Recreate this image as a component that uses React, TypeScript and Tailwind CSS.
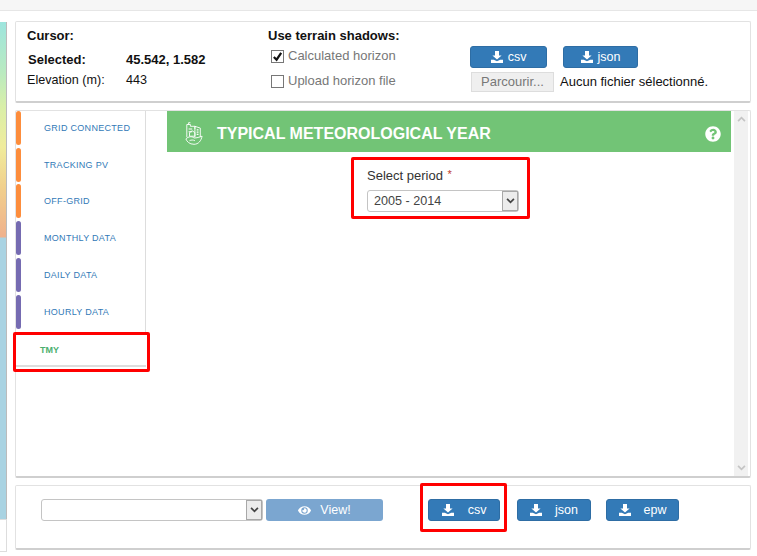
import { FaEye, FaQuestionCircle } from 'react-icons/fa';

const TABS = [
  { label: 'GRID CONNECTED', bar: 'bg-[#fd8d3c]' },
  { label: 'TRACKING PV', bar: 'bg-[#fd8d3c]' },
  { label: 'OFF-GRID', bar: 'bg-[#fd8d3c]' },
  { label: 'MONTHLY DATA', bar: 'bg-[#756bb1]' },
  { label: 'DAILY DATA', bar: 'bg-[#756bb1]' },
  { label: 'HOURLY DATA', bar: 'bg-[#756bb1]' },
];

function DownloadIcon() {
  return (
    <svg viewBox="0 0 12 12" className="w-3 h-3 shrink-0" fill="#fff">
      <path d="M4 0h4v4.5h2.6L6 8.6 1.400 4.500H4z" />
      <path d="M0 8.800h2.800L6 10.200l3.200-1.400H12V12H0z" />
    </svg>
  );
}

function Chevron({ up, color }: { up?: boolean; color: string }) {
  return (
    <svg viewBox="0 0 10 7" className="w-[9px] h-[6px]" fill="none" stroke={color} strokeWidth="2">
      <path d={up ? 'M1 6l4-4 4 4' : 'M1 1l4 4 4-4'} />
    </svg>
  );
}

function BlueButton({ label, className, gap }: { label: string; className: string; gap: string }) {
  return (
    <button className={`h-[22px] bg-[#337ab7] border border-[#2e6da4] rounded-[3px] text-white text-[12.500px] flex items-center justify-center ${gap} ${className}`}>
      <DownloadIcon />
      <span>{label}</span>
    </button>
  );
}

function FakeSelect({ value, className }: { value?: string; className: string }) {
  return (
    <div className={`h-[22px] bg-white border border-[#c4c4c4] rounded-[3px] flex items-stretch justify-between ${className}`}>
      <span className="pl-[6px] leading-[20px] text-[#444] text-[12.600px]">{value}</span>
      <span className="w-[16px] bg-[#ececec] border border-[#a8a8a8] flex items-center justify-center">
        <Chevron color="#444" />
      </span>
    </div>
  );
}

function BuildingIcon() {
  return (
    <svg viewBox="0 0 20 26" className="w-[18px] h-[25px] -mt-[2px] shrink-0" fill="none" stroke="#fff" strokeWidth="1">
      <path d="M2 17V3h4v2h5v3" />
      <path d="M4 3V1h2" />
      <path d="M11 17V5l6 2v10" />
      <path d="M13 9h2M13 11.500h2M13 14h2M4 8h4M4 11h4" strokeWidth="1.200" />
      <path d="M5 12l3-2 3 2v4H5z" />
      <path d="M1 19c3-3 7-3 9-1 3 0 6-1 9-2-1 5-4 9-9 9-5 0-8-3-9-6z" />
      <path d="M5 21c2-1 4-1 6 0" />
    </svg>
  );
}

export default function App() {
  return (
    <div className="relative w-[757px] h-[556px] overflow-hidden bg-white font-['Liberation_Sans',Arial,sans-serif] text-[13px] text-[#111]">
      <div className="h-[11px] bg-[#f6f6f6] border-b border-[#e6e6e6]" />

      <div className="flex pt-[10px] h-[545px]">
        <div className="w-[7px] shrink-0 flex flex-col pt-[1px]">
          <div className="h-[497px] border-r border-[#bbb] bg-[linear-gradient(180deg,#9de5de_0px,#b9eac0_50px,#d9efa8_85px,#f0ec9c_125px,#f1d08c_165px,#efb18c_215px,#a9d3e2_216px,#a9d3e2_100%)]" />
          <div className="h-[33px] border-r border-t border-b border-[#ddd] bg-white" />
        </div>

        <div className="ml-[8px] w-[736px] flex flex-col">
          {/* Top panel */}
          <div className="h-[82px] shrink-0 bg-white border border-[#e2e2e2] border-b-2 border-b-[#cfcfcf] rounded-[2px] flex">
            <div className="w-[239px] pl-[11px] pt-[6px] shrink-0">
              <div className="font-bold text-[13px] leading-[16px]">Cursor:</div>
              <div className="flex mt-[8px] font-bold leading-[16px]">
                <span className="w-[99px] pl-[1px]">Selected:</span>
                <span>45.542, 1.582</span>
              </div>
              <div className="flex mt-[4px] text-[12.600px] leading-[16px]">
                <span className="w-[99px]">Elevation (m):</span>
                <span>443</span>
              </div>
            </div>
            <div className="w-[215px] pl-[13px] pt-[6px] shrink-0">
              <div className="font-bold leading-[16px]">Use terrain shadows:</div>
              <div className="flex items-center gap-[4px] mt-[4px] ml-[3px] text-[13px] text-[#777] leading-[16px]">
                <span className="w-[13px] h-[13px] border border-[#777] bg-white flex items-center justify-center">
                  <svg viewBox="0 0 12 12" className="w-[11px] h-[11px]" fill="none" stroke="#111" strokeWidth="2.400">
                    <path d="M2 6.500l3 3 5-7.500" />
                  </svg>
                </span>
                Calculated horizon
              </div>
              <div className="flex items-center gap-[4px] mt-[9px] ml-[3px] text-[13px] text-[#777] leading-[16px]">
                <span className="w-[13px] h-[13px] border border-[#777] bg-white" />
                Upload horizon file
              </div>
            </div>
            <div className="pt-[24px]">
              <div className="flex gap-[16px]">
                <BlueButton label="csv" className="w-[77px]" gap="gap-[5px]" />
                <BlueButton label="json" className="w-[75px]" gap="gap-[5px]" />
              </div>
              <div className="flex items-center mt-[4px] ml-[1px]">
                <span className="w-[83px] h-[20px] bg-[#efefef] border border-[#ddd] text-[#777] text-[13px] leading-[18px] text-center">Parcourir...</span>
                <span className="ml-[6px] text-[13px] whitespace-nowrap">Aucun fichier sélectionné.</span>
              </div>
            </div>
          </div>

          {/* Middle panel */}
          <div className="h-[368px] mt-[7px] shrink-0 bg-white border border-[#e2e2e2] border-b-2 border-b-[#cfcfcf] rounded-[2px] flex">
            <div className="w-[130px] shrink-0 h-[256px] border-r border-[#ddd] flex flex-col">
              {TABS.map((tab) => (
                <div key={tab.label} className="h-[37px] flex items-start">
                  <span className={`w-[5px] h-[34px] rounded-[3px] ${tab.bar}`} />
                  <span className="ml-[23px] mt-[11px] text-[9px] leading-[12px] tracking-[0.3px] text-[#337ab7]">{tab.label}</span>
                </div>
              ))}
              <div className="h-[34px] mt-[2px] -mr-[1px] bg-white border-b-2 border-[#ddd] pl-[24px] pt-[11px] text-[9px] leading-[12px] font-bold text-[#4caf6e]">TMY</div>
            </div>
            <div className="w-[21px] shrink-0" />
            <div className="w-[564px] shrink-0 flex flex-col">
              <div className="h-[41px] bg-[#72c476] flex items-center pt-[5px] pl-[18px] pr-[10px] text-white">
                <BuildingIcon />
                <span className="ml-[14px] font-bold text-[16px]">TYPICAL METEOROLOGICAL YEAR</span>
                <FaQuestionCircle className="ml-auto w-[16px] h-[16px]" />
              </div>
              <div className="pl-[200px] pt-[16px]">
                <div className="text-[13px] leading-[16px] text-[#333]">
                  Select period <span className="ml-[1px] text-[#c0392b] align-top text-[11px] leading-[12px]">*</span>
                </div>
                <FakeSelect value="2005 - 2014" className="w-[152px] mt-[6px]" />
              </div>
            </div>
            <div className="w-[14px] ml-[3px] shrink-0 bg-[#f1f1f1] flex flex-col items-center justify-between py-[5px]">
              <Chevron up color="#c4c4c4" />
              <Chevron color="#c4c4c4" />
            </div>
          </div>

          {/* Bottom panel */}
          <div className="h-[65px] mt-[7px] shrink-0 bg-white border border-[#e2e2e2] border-b-2 border-b-[#cfcfcf] rounded-[2px] flex items-start pt-[13px] pl-[25px]">
            <FakeSelect className="w-[222px]" />
            <button className="ml-[3px] w-[117px] h-[22px] bg-[#7ba6d0] rounded-[3px] text-white text-[12.500px] flex items-center justify-center gap-[9px]">
              <FaEye className="w-[13px] h-[13px]" />
              View!
            </button>
            <BlueButton label="csv" className="ml-[45px] w-[72px]" gap="gap-[14px]" />
            <BlueButton label="json" className="ml-[17px] w-[74px]" gap="gap-[13px]" />
            <BlueButton label="epw" className="ml-[15px] w-[73px]" gap="gap-[13px]" />
          </div>
        </div>
      </div>

      {/* annotation boxes */}
      <div className="absolute left-[13px] top-[332px] w-[137px] h-[40px] border-[3px] border-[#f00] rounded-[2px]" />
      <div className="absolute left-[351px] top-[157px] w-[179px] h-[62px] border-[3px] border-[#f00] rounded-[2px]" />
      <div className="absolute left-[420px] top-[483px] w-[87px] h-[49px] border-[3px] border-[#f00] rounded-[2px]" />
    </div>
  );
}
